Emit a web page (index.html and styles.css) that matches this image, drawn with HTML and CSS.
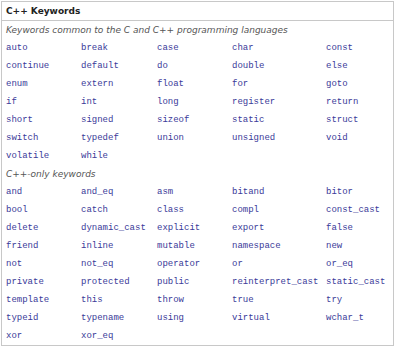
FILE: index.html
```html
<!DOCTYPE html>
<html>
<head>
<meta charset="utf-8">
<link rel="stylesheet" href="styles.css">
</head>
<body>
<div class="box">
  <div class="head">C++ Keywords</div>
  <div class="body">
    <div class="cap">Keywords common to the C and C++ programming languages</div>
    <div class="grid">
      <span>auto</span><span>break</span><span>case</span><span>char</span><span>const</span>
      <span>continue</span><span>default</span><span>do</span><span>double</span><span>else</span>
      <span>enum</span><span>extern</span><span>float</span><span>for</span><span>goto</span>
      <span>if</span><span>int</span><span>long</span><span>register</span><span>return</span>
      <span>short</span><span>signed</span><span>sizeof</span><span>static</span><span>struct</span>
      <span>switch</span><span>typedef</span><span>union</span><span>unsigned</span><span>void</span>
      <span>volatile</span><span>while</span>
    </div>
    <div class="cap">C++-only keywords</div>
    <div class="grid">
      <span>and</span><span>and_eq</span><span>asm</span><span>bitand</span><span>bitor</span>
      <span>bool</span><span>catch</span><span>class</span><span>compl</span><span>const_cast</span>
      <span>delete</span><span>dynamic_cast</span><span>explicit</span><span>export</span><span>false</span>
      <span>friend</span><span>inline</span><span>mutable</span><span>namespace</span><span>new</span>
      <span>not</span><span>not_eq</span><span>operator</span><span>or</span><span>or_eq</span>
      <span>private</span><span>protected</span><span>public</span><span>reinterpret_cast</span><span>static_cast</span>
      <span>template</span><span>this</span><span>throw</span><span>true</span><span>try</span>
      <span>typeid</span><span>typename</span><span>using</span><span>virtual</span><span>wchar_t</span>
      <span>xor</span><span>xor_eq</span>
    </div>
  </div>
</div>
</body>
</html>
```

FILE: styles.css
```css
html, body {
  margin: 0;
  padding: 0;
  background: #fff;
}
.box {
  margin: 1px 0 0 1px;
  width: 391px;
  height: 343px;
  border: 1px solid #c8c8c8;
  font-family: "DejaVu Sans", Verdana, sans-serif;
}
.head {
  height: 18px;
  line-height: 18px;
  padding-left: 4px;
  font-size: 9px;
  font-weight: bold;
  color: #222;
  border-bottom: 1px solid #c8c8c8;
}
.body {
  padding-left: 4px;
}
.cap {
  height: 18px;
  line-height: 18px;
  font-size: 9px;
  font-style: italic;
  color: #555;
}
.grid {
  display: grid;
  grid-template-columns: 75px 76px 75px 94px auto;
  grid-auto-rows: 18px;
  font-family: "Liberation Mono", "Courier New", monospace;
  font-size: 9px;
  line-height: 18px;
  color: #3a3a99;
}
.grid span {
  white-space: nowrap;
}
```
